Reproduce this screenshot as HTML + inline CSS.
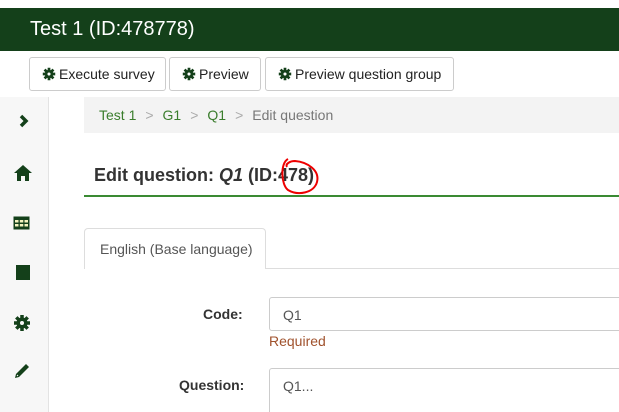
<!DOCTYPE html>
<html><head><style>
*{box-sizing:border-box;margin:0;padding:0}
html,body{width:619px;height:412px;overflow:hidden}
body{background:#fff;font-family:"Liberation Sans",sans-serif;position:relative}
.hdr{position:absolute;top:8px;left:0;width:619px;height:43px;background:#14401a;color:#fff;font-size:20px;padding:10px 0 0 30px}
.btn{position:absolute;top:57px;height:34px;border:1px solid #ccc;border-radius:3px;background:#fff;font-size:14px;color:#222;padding:8px 0 0 29px}
.btn svg{left:12px;top:9px}
.side{position:absolute;top:97px;left:0;width:49px;height:315px;background:#f7f7f7;border-right:1px solid #e3e3e3}
.crumb{position:absolute;top:97px;left:84px;width:535px;height:36px;background:#f3f3f3;font-size:14px;padding:10px 0 0 15px;color:#3a7d2c}
.crumb .s{color:#aaa;margin:0 9px}
.h{position:absolute;top:165px;left:94px;font-size:18px;color:#333;font-weight:bold}
.line{position:absolute;top:195px;left:84px;width:535px;height:2px;background:#3a8a33}
.tab{position:absolute;top:228px;left:84px;width:182px;height:41px;border:1px solid #ddd;border-bottom:none;border-radius:4px 4px 0 0;font-size:14px;color:#555;padding:12px 0 0 15px;background:#fff}
.tabl{position:absolute;top:268px;left:266px;width:353px;height:1px;background:#ddd}
.lbl{position:absolute;font-size:14px;font-weight:bold;color:#333}
.inp{position:absolute;left:269px;width:360px;border:1px solid #ccc;border-radius:3px;font-size:14px;color:#555;padding:9px 0 0 13px}
svg{position:absolute}
</style></head><body>
<div class="hdr">Test 1 (ID:478778)</div>
<div class="btn" style="left:29px;width:137px"><svg width="14" height="14" viewBox="0 0 18 18"><g stroke="#14401a" stroke-width="3.5"><path d="M9 1v16M1 9h16M3.3 3.3l11.4 11.4M14.7 3.3L3.3 14.7"/></g><circle cx="9" cy="9" r="5.5" fill="#14401a"/><circle cx="9" cy="9" r="2" fill="#fff"/></svg>Execute survey</div>
<div class="btn" style="left:169px;width:92px"><svg width="14" height="14" viewBox="0 0 18 18"><g stroke="#14401a" stroke-width="3.5"><path d="M9 1v16M1 9h16M3.3 3.3l11.4 11.4M14.7 3.3L3.3 14.7"/></g><circle cx="9" cy="9" r="5.5" fill="#14401a"/><circle cx="9" cy="9" r="2" fill="#fff"/></svg>Preview</div>
<div class="btn" style="left:265px;width:189px"><svg width="14" height="14" viewBox="0 0 18 18"><g stroke="#14401a" stroke-width="3.5"><path d="M9 1v16M1 9h16M3.3 3.3l11.4 11.4M14.7 3.3L3.3 14.7"/></g><circle cx="9" cy="9" r="5.5" fill="#14401a"/><circle cx="9" cy="9" r="2" fill="#fff"/></svg>Preview question group</div>
<div class="side"></div>
<svg style="left:18px;top:114px" width="12" height="14" viewBox="0 0 12 14"><path d="M3 2l5 5-5 5" stroke="#14401a" stroke-width="3.5" fill="none"/></svg>
<svg style="left:13px;top:164px" width="20" height="18" viewBox="0 0 20 18"><path d="M10 1L1 9h3v8h4v-5h4v5h4V9h3z" fill="#14401a"/></svg>
<svg style="left:13px;top:216px" width="17" height="14" viewBox="0 0 17 14"><rect x="0.5" y="0.5" width="16" height="13" fill="#14401a"/><g fill="#f5f5c0"><rect x="2" y="4" width="3.5" height="2.5"/><rect x="6.8" y="4" width="3.5" height="2.5"/><rect x="11.5" y="4" width="3.5" height="2.5"/><rect x="2" y="8" width="3.5" height="2.5"/><rect x="6.8" y="8" width="3.5" height="2.5"/><rect x="11.5" y="8" width="3.5" height="2.5"/></g></svg>
<svg style="left:16px;top:265px" width="14" height="15"><rect width="14" height="15" fill="#14401a"/></svg>
<svg style="left:13px;top:314px" width="18" height="18" viewBox="0 0 18 18"><g stroke="#14401a" stroke-width="3.5"><path d="M9 1v16M1 9h16M3.3 3.3l11.4 11.4M14.7 3.3L3.3 14.7"/></g><circle cx="9" cy="9" r="5.5" fill="#14401a"/><circle cx="9" cy="9" r="2" fill="#f7f7f7"/></svg>
<svg style="left:13px;top:362px" width="18" height="18" viewBox="0 0 18 18"><path d="M2 16l1-4L13 2l3 3L6 15z" fill="#14401a"/><path d="M4 13l1 1" stroke="#fff" stroke-width="1"/></svg>
<div class="crumb">Test 1<span class="s">&gt;</span>G1<span class="s">&gt;</span>Q1<span class="s">&gt;</span><span style="color:#777">Edit question</span></div>
<div class="h">Edit question: <i>Q1</i> (ID:478)</div>
<svg style="left:278px;top:155px" width="48" height="42" viewBox="0 0 48 42"><path d="M10 4C2 8 3 30 10 35c10 6 26 3 29-8 3-12-10-20-22-21-5 0-10 3-8 6" stroke="#e00" stroke-width="2" fill="none"/></svg>
<div class="line"></div>
<div class="tab">English (Base language)</div>
<div class="tabl"></div>
<div class="lbl" style="left:203px;top:306px">Code:</div>
<div class="inp" style="top:297px;height:34px">Q1</div>
<div style="position:absolute;left:269px;top:333px;font-size:14px;color:#a0522d">Required</div>
<div class="lbl" style="left:179px;top:377px">Question:</div>
<div class="inp" style="top:368px;height:60px">Q1...</div>
</body></html>
